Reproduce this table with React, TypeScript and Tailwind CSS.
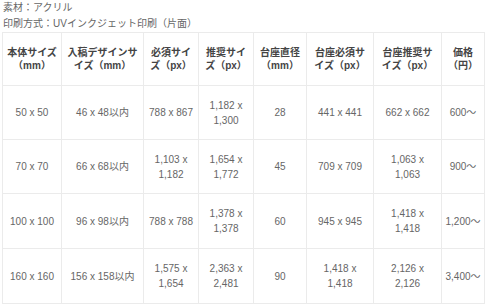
const headers: string[][] = [
  ["本体サイズ", "（mm）"],
  ["入稿デザインサ", "イズ（mm）"],
  ["必須サイ", "ズ（px）"],
  ["推奨サイ", "ズ（px）"],
  ["台座直径", "（mm）"],
  ["台座必須サ", "イズ（px）"],
  ["台座推奨サ", "イズ（px）"],
  ["価格", "（円）"],
];

const widths = ["w-[59px]", "w-[82px]", "w-[55px]", "w-[55px]", "w-[53px]", "w-[67px]", "w-[68px]", "w-[43px]"];

// each cell is a list of lines
const rows: string[][][] = [
  [["50 x 50"], ["46 x 48以内"], ["788 x 867"], ["1,182 x", "1,300"], ["28"], ["441 x 441"], ["662 x 662"], ["600～"]],
  [["70 x 70"], ["66 x 68以内"], ["1,103 x", "1,182"], ["1,654 x", "1,772"], ["45"], ["709 x 709"], ["1,063 x", "1,063"], ["900～"]],
  [["100 x 100"], ["96 x 98以内"], ["788 x 788"], ["1,378 x", "1,378"], ["60"], ["945 x 945"], ["1,418 x", "1,418"], ["1,200～"]],
  [["160 x 160"], ["156 x 158以内"], ["1,575 x", "1,654"], ["2,363 x", "2,481"], ["90"], ["1,418 x", "1,418"], ["2,126 x", "2,126"], ["3,400～"]],
];

const rowHeights = ["h-[54px]", "h-[54px]", "h-[55px]", "h-[55px]"];

export default function App() {
  return (
    <div
      className="w-[490px] h-[307px] overflow-hidden bg-white px-[2px] text-[#666]"
      style={{ fontFamily: '"Liberation Sans", "Noto Sans CJK JP", sans-serif' }}
    >
      <p className="text-[10px] leading-[16px] pl-px">素材：アクリル</p>
      <p className="text-[10px] leading-[16px] pl-px">印刷方式：UVインクジェット印刷（片面）</p>
      <table className="table-fixed border-collapse w-[482px]">
        <colgroup>
          {widths.map((w, i) => (
            <col key={i} className={w} />
          ))}
        </colgroup>
        <thead>
          <tr className="h-[53px]">
            {headers.map((h, i) => (
              <th key={i} className="border border-[#ebebeb] p-0 text-center align-middle text-[10px] leading-[13px] font-bold text-[#444]">
                {h[0]}
                <br />
                {h[1]}
              </th>
            ))}
          </tr>
        </thead>
        <tbody>
          {rows.map((r, ri) => (
            <tr key={ri} className={rowHeights[ri]}>
              {r.map((c, ci) => (
                <td key={ci} className="border border-[#ebebeb] p-0 text-center align-middle text-[10px] leading-[15px]">
                  {c.map((line, li) => (
                    <div key={li}>{line}</div>
                  ))}
                </td>
              ))}
            </tr>
          ))}
        </tbody>
      </table>
    </div>
  );
}
